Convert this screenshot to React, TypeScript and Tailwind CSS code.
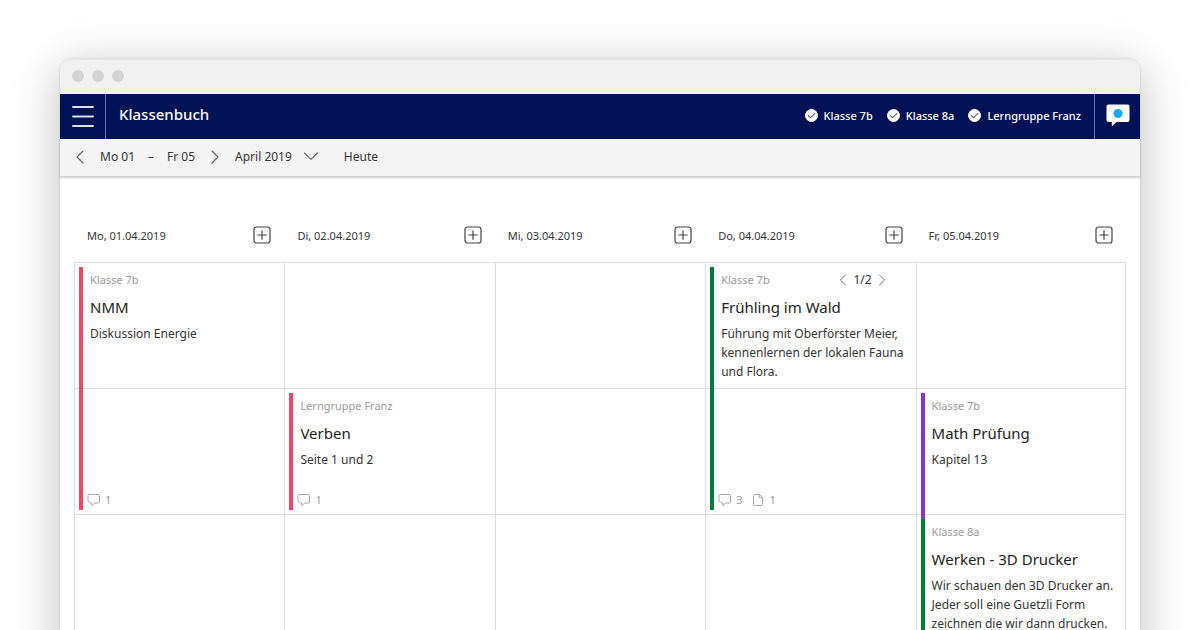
import { useState } from "react";
import type { ReactNode } from "react";

type Entry = {
  group: string;
  title: string;
  text: string;
  place: string;
  bar: string;
  comments?: number;
  files?: number;
  pager?: string;
};

const days = ["Mo, 01.04.2019", "Di, 02.04.2019", "Mi, 03.04.2019", "Do, 04.04.2019", "Fr, 05.04.2019"];
const groups = ["Klasse 7b", "Klasse 8a", "Lerngruppe Franz"];
const months = ["März 2019", "April 2019", "Mai 2019"];
const columns = ["col-start-1", "col-start-2", "col-start-3", "col-start-4", "col-start-5 border-r"];
const rows = ["row-start-1", "row-start-2", "row-start-3", "row-start-4"];

const entries: Entry[] = [
  {
    group: "Klasse 7b",
    title: "NMM",
    text: "Diskussion Energie",
    place: "col-start-1 row-start-1 row-span-2",
    bar: "border-[#ed4869]",
    comments: 1,
  },
  {
    group: "Lerngruppe Franz",
    title: "Verben",
    text: "Seite 1 und 2",
    place: "col-start-2 row-start-2",
    bar: "border-[#ed4869]",
    comments: 1,
  },
  {
    group: "Klasse 7b",
    title: "Frühling im Wald",
    text: "Führung mit Oberförster Meier, kennenlernen der lokalen Fauna und Flora.",
    place: "col-start-4 row-start-1 row-span-2",
    bar: "border-[#007d3e]",
    comments: 3,
    files: 1,
    pager: "1/2",
  },
  {
    group: "Klasse 7b",
    title: "Math Prüfung",
    text: "Kapitel 13",
    place: "col-start-5 row-start-2 row-span-2",
    bar: "border-[#8635c4]",
  },
  {
    group: "Klasse 8a",
    title: "Werken - 3D Drucker",
    text: "Wir schauen den 3D Drucker an. Jeder soll eine Guetzli Form zeichnen die wir dann drucken.",
    place: "col-start-5 row-start-3 row-span-2",
    bar: "border-[#007d3e]",
  },
];

function Chevron({ d, className }: { d: string; className: string }) {
  return (
    <svg viewBox="0 0 14 14" className={className} fill="none" stroke="#666666" strokeWidth="1.1" strokeLinecap="round" strokeLinejoin="round" aria-hidden="true">
      <path d={d} />
    </svg>
  );
}

const LEFT = "M10 1 4 7l6 6";
const RIGHT = "M4 1l6 6-6 6";
const DOWN = "M.6 3l6.400 6.400 6.400-6.400";

function IconButton({ label, className = "", children }: { label: string; className?: string; children: ReactNode }) {
  return (
    <button type="button" aria-label={label} className={`flex shrink-0 items-center justify-center ${className}`}>
      {children}
    </button>
  );
}

function GroupFilter({ name }: { name: string }) {
  const [on, setOn] = useState(true);
  return (
    <label className="flex items-center gap-[6px] text-[11px] leading-[16px] font-medium">
      <span className="grid size-[13px] shrink-0">
        <input
          type="checkbox"
          checked={on}
          onChange={() => setOn(!on)}
          className="col-start-1 row-start-1 size-[13px] appearance-none rounded-full border border-white checked:bg-white"
        />
        <svg viewBox="0 0 13 13" className="pointer-events-none col-start-1 row-start-1 size-[13px]" fill="none" stroke="#4d5888" strokeWidth="1.1" strokeLinecap="round" strokeLinejoin="round" aria-hidden="true">
          <path d="M3.200 6.600 5.500 8.700 10 4.400" />
        </svg>
      </span>
      {name}
    </label>
  );
}

function Card({ entry }: { entry: Entry }) {
  return (
    <article className={`mt-[5px] mb-1 ml-[5px] flex flex-col border-l-4 ${entry.place} ${entry.bar}`}>
      <div className="flex h-[26px] items-center justify-between pr-7 pl-[7px]">
        <p className="text-[11px] leading-[16px] text-[#9a9a9a]">{entry.group}</p>
        {entry.pager && (
          <div className="flex items-center gap-1 text-[12px] leading-[16px] text-[#333333]">
            <IconButton label="Vorheriger Eintrag">
              <Chevron d={LEFT} className="size-3" />
            </IconButton>
            <span>{entry.pager}</span>
            <IconButton label="Nächster Eintrag">
              <Chevron d={RIGHT} className="size-3" />
            </IconButton>
          </div>
        )}
      </div>
      <h3 className="pl-[7px] text-[15px] leading-[28px] text-[#222222]">{entry.title}</h3>
      <p className="mt-[3px] pl-[7px] text-[12px] leading-[19px] text-[#333333]">{entry.text}</p>
      {entry.comments && (
        <footer className="mt-auto flex h-5 items-center gap-[9px] pl-1 text-[11px] leading-[16px] text-[#9a9a9a]">
          <span className="flex items-center gap-1">
            <svg viewBox="0 0 14 14" className="size-[14px]" fill="none" stroke="#a8a8a8" strokeWidth="1" strokeLinejoin="round" aria-label="Kommentare">
              <path d="M2 1.500h9.500a1 1 0 0 1 1 1V9a1 1 0 0 1-1 1H7.800L4.800 12.700V10H3.200L1 8V2.500a1 1 0 0 1 1-1Z" />
            </svg>
            {entry.comments}
          </span>
          {entry.files && (
            <span className="flex items-center gap-1">
              <svg viewBox="0 0 14 14" className="size-[14px]" fill="none" stroke="#a8a8a8" strokeWidth="1" strokeLinejoin="round" aria-label="Dateien">
                <path d="M3.500 1.500H8.500L11.500 4.500V11.500a1 1 0 0 1-1 1H3.500a1 1 0 0 1-1-1V2.500a1 1 0 0 1 1-1ZM8.200 1.500V4.800H11.500" />
              </svg>
              {entry.files}
            </span>
          )}
        </footer>
      )}
    </article>
  );
}

export default function App() {
  const [month, setMonth] = useState("April 2019");
  return (
    <div className="flex h-screen flex-col overflow-hidden bg-white px-[60px] pt-[59px] font-['Noto_Sans',sans-serif] text-[#333333]">
      <div className="flex flex-1 shrink-0 flex-col rounded-t-[11px] bg-white shadow-[0_0_2px_rgba(0,20,20,0.18),0_10px_50px_rgba(0,0,0,0.26)]">
        <div className="flex h-[35px] shrink-0 items-center gap-2 rounded-t-[11px] border-t border-[#e6e8e8] bg-[#f1f1f1] px-3 pb-[2px]">
          <span className="size-3 rounded-full bg-[#d5d5d5]" />
          <span className="size-3 rounded-full bg-[#d5d5d5]" />
          <span className="size-3 rounded-full bg-[#d5d5d5]" />
        </div>

        <header className="flex h-[45px] shrink-0 items-stretch bg-[#001155] text-white">
          <IconButton label="Menü" className="w-[46px] border-r border-[#66709a] pb-[2px]">
            <svg viewBox="0 0 22 22" className="size-[22px]" stroke="#dcdfe9" strokeWidth="1.900" strokeLinecap="round" aria-hidden="true">
              <path d="M1 2h20M1 11.500h20M1 21h20" />
            </svg>
          </IconButton>
          <h1 className="flex-1 pt-[10px] pl-[13px] text-[15px] leading-[20px] font-medium">Klassenbuch</h1>
          <div className="flex items-center gap-[14px] pr-[13px] pb-[2px]">
            {groups.map((g) => (
              <GroupFilter key={g} name={g} />
            ))}
          </div>
          <IconButton label="Nachrichten" className="w-[46px] border-l border-[#66709a] pb-[3px]">
            <svg viewBox="0 0 24 24" className="size-6" aria-hidden="true">
              <path fill="#ffffff" d="M2.500 1.500h19A2 2 0 0 1 23.500 3.500V17a2 2 0 0 1-2 2H10.500L5.800 23.500V19H2.500A2 2 0 0 1 .5 17V3.500A2 2 0 0 1 2.500 1.500Z" />
              <circle cx="12" cy="10.500" r="4.500" fill="#11aaff" />
            </svg>
          </IconButton>
        </header>

        <nav className="flex h-[38px] shrink-0 items-center border-b border-[#d0d0d0] bg-[#f4f4f4] pb-[2px] pl-[13px] text-[12px] leading-[18px] shadow-[0_1px_2px_rgba(0,0,0,0.2)]">
          <IconButton label="Vorherige Woche">
            <Chevron d={LEFT} className="size-[14px]" />
          </IconButton>
          <p className="flex gap-[13px] px-[13px]">
            <span>Mo 01</span>
            <span>–</span>
            <span>Fr 05</span>
          </p>
          <IconButton label="Nächste Woche">
            <Chevron d={RIGHT} className="size-[14px]" />
          </IconButton>
          <div className="ml-[13px] grid items-center">
            <select
              aria-label="Monat"
              value={month}
              onChange={(e) => setMonth(e.target.value)}
              className="col-start-1 row-start-1 [field-sizing:content] appearance-none bg-transparent pr-[26px] text-[12px] leading-[18px]"
            >
              {months.map((m) => (
                <option key={m}>{m}</option>
              ))}
            </select>
            <Chevron d={DOWN} className="pointer-events-none col-start-1 row-start-1 size-[14px] justify-self-end" />
          </div>
          <button type="button" className="ml-[26px]">
            Heute
          </button>
        </nav>

        <main className="px-[14px] pt-[42px]">
          <div className="grid grid-cols-5">
            {days.map((d) => (
              <div key={d} className="flex h-[43px] items-start justify-between pr-[13px] pl-[13px]">
                <h2 className="pt-[9px] text-[11px] leading-[16px]">{d}</h2>
                <IconButton label={`Eintrag hinzufügen: ${d}`} className="py-[7px]">
                  <svg viewBox="0 0 18 18" className="size-[18px]" fill="none" stroke="#444444" strokeWidth="1.200" strokeLinecap="round" aria-hidden="true">
                    <rect x="1" y="1" width="16" height="16" rx="2.500" />
                    <path d="M9 4.800v8.400M4.800 9h8.400" />
                  </svg>
                </IconButton>
              </div>
            ))}
          </div>
          <div className="grid grid-cols-5 grid-rows-[repeat(4,126px)]">
            {rows.map((r) =>
              columns.map((c) => <div key={r + c} className={`border-t border-l border-[#dddddd] ${r} ${c}`} />),
            )}
            {entries.map((e) => (
              <Card key={e.group + e.title} entry={e} />
            ))}
          </div>
        </main>
      </div>
    </div>
  );
}
